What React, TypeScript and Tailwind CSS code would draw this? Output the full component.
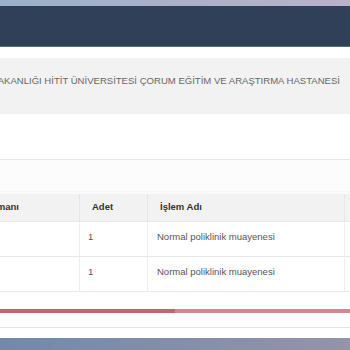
import React from "react";

export default function App() {
  const font = { fontFamily: '"Liberation Sans", Arial, sans-serif' };
  return (
    <div className="w-[350px] h-[350px] overflow-hidden bg-white flex flex-col" style={font}>
      <div className="h-[6px] shrink-0 bg-gradient-to-r from-[#9bb0ca] to-[#bab2c6]" />
      <div className="h-[41px] shrink-0 bg-[#2f4058] border-b border-[#5d6d75]" />
      <div className="h-[11px] shrink-0" />
      <div className="h-[56px] shrink-0 bg-[#f2f2f2] flex justify-end pr-[10px] pt-[17px] overflow-hidden">
        <span className="whitespace-nowrap text-[9.55px] leading-[12px] text-[#666666]">
          T.C. SAĞLIK BAKANLIĞI HİTİT ÜNİVERSİTESİ ÇORUM EĞİTİM VE ARAŞTIRMA HASTANESİ
        </span>
      </div>
      <div className="h-[45px] shrink-0" />
      <div className="h-[1px] shrink-0 bg-[#e6e6e6]" />
      <div className="h-[31px] shrink-0 bg-[#fcfcfc]" />
      <div className="h-[1px] shrink-0 bg-[#f6f6f6]" />
      <div className="h-[2px] shrink-0 bg-[#fafafa]" />
      <div className="shrink-0 flex flex-col">
        <div className="h-[28px] bg-[#f2f2f2] flex text-[9.5px] font-bold text-[#333333] border-b border-[#e8e8e8]">
          <div className="w-[80px] flex items-center justify-end overflow-hidden border-r border-[#e6e6e6]">
            <span className="whitespace-nowrap pr-[60px]">Hekim Uzmanı</span>
          </div>
          <div className="w-[68px] flex items-center pl-[12px] border-r border-[#e6e6e6]">Adet</div>
          <div className="w-[197px] flex items-center pl-[12px] border-r border-[#e6e6e6]">İşlem Adı</div>
          <div className="flex-1" />
        </div>
        {[0, 1].map((i) => (
          <div key={i} className="h-[35px] flex text-[9.5px] text-[#555555] border-b border-[#e8e8e8]">
            <div className="w-[80px] border-r border-[#eeeeee]" />
            <div className="w-[68px] pl-[8px] pt-[8px] border-r border-[#eeeeee]">1</div>
            <div className="w-[197px] pl-[9px] pt-[8px] border-r border-[#eeeeee]">Normal poliklinik muayenesi</div>
            <div className="flex-1" />
          </div>
        ))}
      </div>
      <div className="h-[17px] shrink-0" />
      <div className="h-[4px] shrink-0 flex">
        <div className="w-[175px] bg-[#c8646f]" />
        <div className="flex-1 bg-[#d9858d]" />
      </div>
      <div className="h-[14px] shrink-0" />
      <div className="h-[1px] shrink-0 bg-[#e4e4e4]" />
      <div className="h-[10px] shrink-0" />
      <div className="flex-1 bg-gradient-to-r from-[#7189aa] to-[#9494aa]" />
    </div>
  );
}
